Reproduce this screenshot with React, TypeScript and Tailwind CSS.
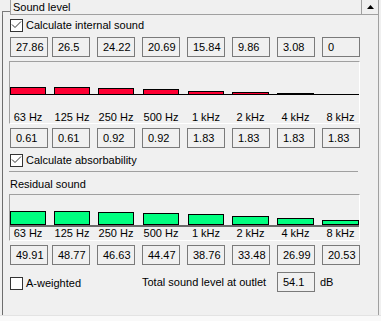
import React from 'react';

const barCols = 'grid grid-cols-[44px_44px_45px_45px_44px_45px_45px_37px]';
const boxCols = 'grid grid-cols-[42px_45px_45px_45px_45px_45px_45px_38px]';

const bands = ['63 Hz', '125 Hz', '250 Hz', '500 Hz', '1 kHz', '2 kHz', '4 kHz', '8 kHz'];
const barWidths = [36, 36, 36, 36, 36, 37, 37, 37];

const internal = ['27.86', '26.5', '24.22', '20.69', '15.84', '9.86', '3.08', '0'];
const internalH = [8, 8, 7, 6, 4, 3, 2, 1];
const absorb = ['0.61', '0.61', '0.92', '0.92', '1.83', '1.83', '1.83', '1.83'];
const residual = ['49.91', '48.77', '46.63', '44.47', '38.76', '33.48', '26.99', '20.53'];
const residualH = [14, 14, 13, 12, 11, 9, 7, 5];

const CheckBox: React.FC<{ checked?: boolean }> = ({ checked }) => (
  <div className="w-[13px] h-[13px] border border-[#333333] bg-white flex items-center justify-center shrink-0">
    {checked && (
      <svg width="11" height="11" viewBox="0 0 11 11">
        <path d="M1 4.5 L4 7.5 L10 1.5" fill="none" stroke="#333333" strokeWidth="1" />
      </svg>
    )}
  </div>
);

const ValueBox: React.FC<{ value: string }> = ({ value }) => (
  <div className="w-[38px] h-[20px] border border-[#7a7a7a] pl-[5px] flex items-center">{value}</div>
);

const BoxRow: React.FC<{ values: string[]; className?: string }> = ({ values, className }) => (
  <div className={`${boxCols} ml-[7px] ${className ?? ''}`}>
    {values.map((v, i) => (
      <ValueBox key={i} value={v} />
    ))}
  </div>
);

const Bar: React.FC<{ h: number; w: number; fill: string }> = ({ h, w, fill }) =>
  h <= 2 ? (
    <div className="bg-black" style={{ height: h, width: w }} />
  ) : (
    <div className={`border border-black ${fill}`} style={{ height: h, width: w }} />
  );

const Labels: React.FC<{ className?: string }> = ({ className }) => (
  <div className={`${barCols} ${className ?? ''}`}>
    {bands.map((b, i) => (
      <div key={b} className="flex justify-center whitespace-nowrap" style={{ width: barWidths[i] }}>
        {b}
      </div>
    ))}
  </div>
);

const App: React.FC = () => {
  return (
    <div className="w-[381px] h-[321px] bg-[#f0f0f0] overflow-hidden flex flex-col font-['Liberation_Sans',Arial,sans-serif] text-[11px] leading-none text-black">
      {/* group header */}
      <div className="flex h-[15px] shrink-0">
        <div className="ml-[2px] w-[8px] h-[4px] self-end border-l border-t border-[#7a7a7a]" />
        <div className="w-[351px] border-l border-b border-[#a0a0a0] pl-[2px] flex items-center">Sound level</div>
        <div className="w-[18px] border-l border-b border-r border-[#a0a0a0] flex items-center justify-center">
          <svg width="7" height="4" viewBox="0 0 7 4">
            <polygon points="0,4 3.5,0 7,4" fill="#000" />
          </svg>
        </div>
      </div>

      {/* group body */}
      <div className="ml-[2px] w-[377px] h-[300px] border-l border-l-[#6d6d6d] border-r border-r-[#a0a0a0] flex flex-col">
        <div className="flex items-center gap-[3px] ml-[7px] mt-[4px] h-[13px]">
          <CheckBox checked />
          <span>Calculate internal sound</span>
        </div>

        <BoxRow values={internal} className="mt-[5px]" />

        <div className="ml-[6px] mt-[4px] w-[351px] border border-t-[#a0a0a0] border-l-[#a0a0a0] border-b-white border-r-white">
          <div className={`${barCols} relative h-[33px] items-end`}>
            <div className="absolute left-0 right-0 bottom-0 h-px bg-black" />
            {internalH.map((h, i) => (
              <div key={i} className="relative">
                <Bar h={h} w={barWidths[i]} fill="bg-[#ff0033]" />
              </div>
            ))}
          </div>
          <div className="h-[16px]" />
          <Labels className="h-[12px] items-center" />
        </div>

        <BoxRow values={absorb} className="mt-[4px]" />

        <div className="flex items-center gap-[3px] ml-[7px] mt-[6px] h-[13px]">
          <CheckBox checked />
          <span>Calculate absorbability</span>
        </div>

        <div className="ml-[6px] mt-[4px] w-[349px] h-px bg-[#a0a0a0]" />

        <div className="ml-[7px] mt-[5px] h-[14px] flex items-center">Residual sound</div>

        <div className="ml-[6px] mt-[3px] w-[351px] border border-t-[#a0a0a0] border-l-[#a0a0a0] border-b-white border-r-white">
          <div className={`${barCols} h-[30px] items-end`}>
            {residualH.map((h, i) => (
              <Bar key={i} h={h} w={barWidths[i]} fill="bg-[#00ff80]" />
            ))}
          </div>
          <div className="h-[2px] bg-[#696969]" />
          <Labels className="h-[13px] items-center" />
        </div>

        <BoxRow values={residual} className="mt-[4px]" />

        <div className="flex ml-[7px] mt-[7px] h-[20px]">
          <div className="w-[132px] flex items-center gap-[3px] mt-[5px] h-[13px]">
            <CheckBox />
            <span>A-weighted</span>
          </div>
          <div className="w-[135px] flex items-center">Total sound level at outlet</div>
          <ValueBox value="54.1" />
          <div className="ml-[5px] flex items-center">dB</div>
        </div>
      </div>

      <div className="h-px bg-[#e3e3e3]" />
      <div className="flex-1 bg-[#f9f9f9]" />
    </div>
  );
};

export default App;
